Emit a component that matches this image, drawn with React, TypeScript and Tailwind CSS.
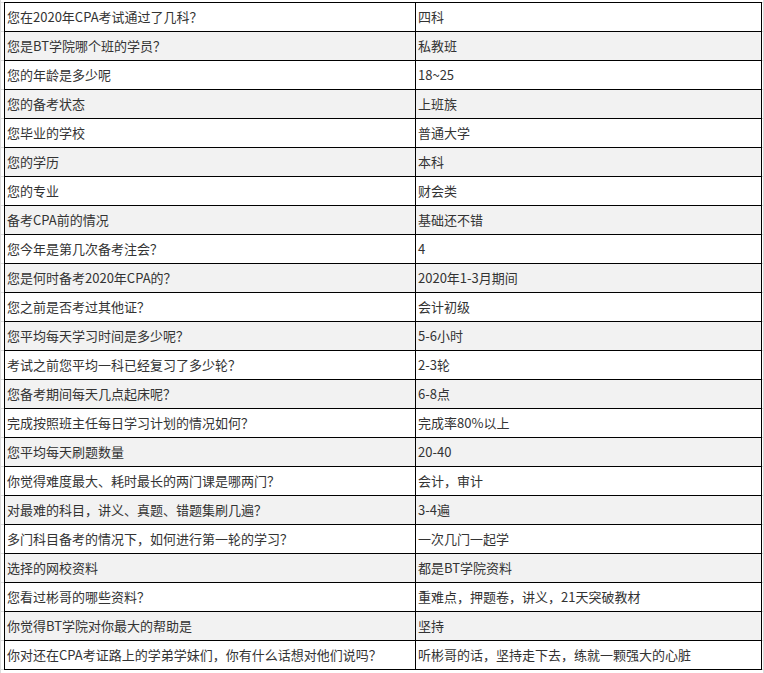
import React from 'react';

const rows: [string, string][] = [
  ['您在2020年CPA考试通过了几科？', '四科'],
  ['您是BT学院哪个班的学员？', '私教班'],
  ['您的年龄是多少呢', '18~25'],
  ['您的备考状态', '上班族'],
  ['您毕业的学校', '普通大学'],
  ['您的学历', '本科'],
  ['您的专业', '财会类'],
  ['备考CPA前的情况', '基础还不错'],
  ['您今年是第几次备考注会？', '4'],
  ['您是何时备考2020年CPA的？', '2020年1-3月期间'],
  ['您之前是否考过其他证？', '会计初级'],
  ['您平均每天学习时间是多少呢？', '5-6小时'],
  ['考试之前您平均一科已经复习了多少轮？', '2-3轮'],
  ['您备考期间每天几点起床呢？', '6-8点'],
  ['完成按照班主任每日学习计划的情况如何？', '完成率80%以上'],
  ['您平均每天刷题数量', '20-40'],
  ['你觉得难度最大、耗时最长的两门课是哪两门？', '会计，审计'],
  ['对最难的科目，讲义、真题、错题集刷几遍？', '3-4遍'],
  ['多门科目备考的情况下，如何进行第一轮的学习？', '一次几门一起学'],
  ['选择的网校资料', '都是BT学院资料'],
  ['您看过彬哥的哪些资料？', '重难点，押题卷，讲义，21天突破教材'],
  ['你觉得BT学院对你最大的帮助是', '坚持'],
  ['你对还在CPA考证路上的学弟学妹们，你有什么话想对他们说吗？', '听彬哥的话，坚持走下去，练就一颗强大的心脏'],
];

export default function App() {
  return (
    <div
      className="w-[764px] h-[673px] bg-white overflow-hidden border-l border-r border-[#dcdcdc] text-[13px] text-[#333333]"
      style={{ fontFamily: '"Microsoft YaHei", "Noto Sans CJK SC", sans-serif' }}
    >
      {/* faint outer grid above the table */}
      <div className="h-[3px] border-b border-[#dcdcdc] flex pl-[3px]">
        <div className="w-[758px] h-[3px] -mb-px border-b border-black" />
      </div>
      {rows.map(([q, a], i) => (
        <div key={i} className="flex items-start h-[29px] border-b border-[#dcdcdc] pl-[3px]">
          <div className={`flex h-[29px] -mb-px ${i % 2 === 1 ? 'bg-[#f2f2f2]' : 'bg-white'}`}>
            <div className="w-[412px] shrink-0 border-l border-r border-b border-black pl-[2px] flex items-center whitespace-nowrap overflow-hidden">
              {q}
            </div>
            <div className="w-[346px] shrink-0 border-r border-b border-black pl-[2px] flex items-center whitespace-nowrap overflow-hidden">
              {a}
            </div>
          </div>
        </div>
      ))}
    </div>
  );
}
